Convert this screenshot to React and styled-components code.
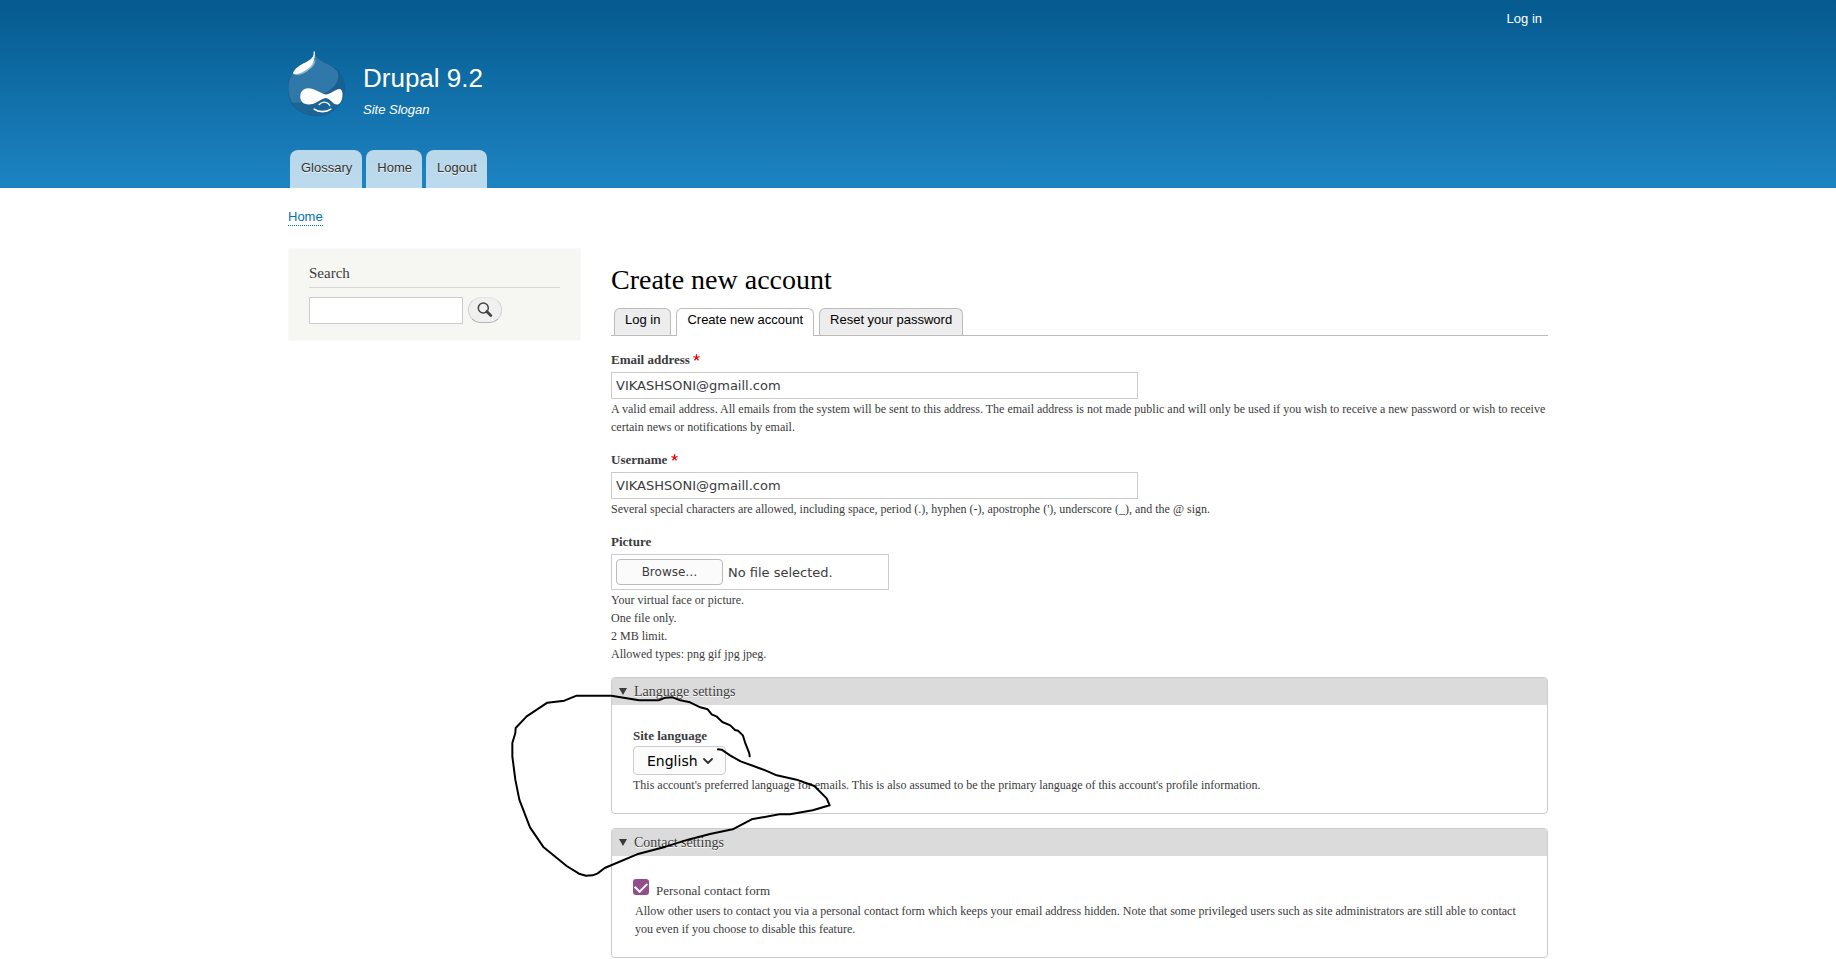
import React, { useRef, useState } from 'react';
import styled, { createGlobalStyle } from 'styled-components';

const serif = '"Liberation Serif", Georgia, serif';
const sans = '"Liberation Sans", Helvetica, sans-serif';
const system = '"DejaVu Sans", sans-serif';

function Logo() {
  return (
    <LogoSvg viewBox="24 18 172 196" aria-hidden="true">
      <path
        d="M102 18 C104 36 92 42 78 50 C48 66 24 88 24 128 C24 178 62 212 110 212 C160 212 195 176 195 128 C195 90 165 66 140 53 C120 43 107 37 104 18Z"
        fill="#2f78a9"
        stroke="#155a8c"
        strokeWidth="2"
      />
      <path
        d="M150 58 C174 70 195 92 195 128 C195 176 160 212 110 212 C72 212 46 194 32 172 C58 180 92 176 118 152 C150 138 172 124 176 94 C176 78 166 66 150 58Z"
        fill="#17608f"
      />
      <path d="M32 172 C60 174 90 172 120 150 L186 160 C172 194 144 212 110 212 C72 212 46 194 32 172Z" fill="#1a6496" />
      <path d="M42 86 C46 92 66 90 84 76 C100 64 107 54 107 42 C96 60 66 80 42 86Z" fill="#93bbd3" />
      <path d="M101 18 C104 36 92 42 78 50 C60 58 42 70 39 84 C48 90 68 82 84 70 C98 60 106 46 105 18Z" fill="#fff" />
      <path
        d="M84 129 C106 129 120 144 139 148 C156 144 168 131 180 131 C188 132 190 144 188 156 C186 168 180 178 172 178 C160 178 152 160 138 158 C122 160 108 178 86 178 C70 178 61 168 61 154 C61 140 70 129 84 129Z"
        fill="#fff"
      />
      <g fill="none" stroke="#fff" strokeLinecap="round">
        <path d="M118 178 C124 172 132 169 140 172 C145 173 148 177 150 181" strokeWidth="4" />
        <path d="M103 192 C116 202 140 202 153 192" strokeWidth="5" />
      </g>
    </LogoSvg>
  );
}

function Required() {
  return (
    <RequiredSvg viewBox="0 0 7 7" role="img" aria-label="required">
      <path d="M3.5 0.3v3.4M0.4 2.5l3.1 1.1 3.1-1.1M1.5 6.4l2-2.8 2 2.8" fill="none" stroke="#e00" strokeWidth="1.3" />
    </RequiredSvg>
  );
}

function Scribble() {
  return (
    <ScribbleSvg viewBox="0 0 1050 660" aria-hidden="true">
      <path
        d="M749 274 L748 265 L735 232 L729 212 L714 197 L705 195 L691 181 L667 171 L649 154 L635 148 L623 133 L601 127 L570 112 L541 106 L518 97 L496 98 L476 106 L417 106 L334 92 L230 92 L193 107 L142 113 L80 154 L47 189 L46 204 L37 234 L37 274 L46 344 L58 404 L90 487 L131 547 L200 603 L237 626 L258 632 L278 631 L293 625 L314 609 L411 568 L497 545 L564 524 L630 507 L698 493 L755 463 L838 448 L870 448 L938 436 L989 421 L980 400 L943 363 L890 344 L830 331 L796 316 L722 289 L690 271 L665 254 L654 253"
        fill="none"
        stroke="#000"
        strokeWidth="6"
        strokeLinecap="round"
        strokeLinejoin="round"
      />
    </ScribbleSvg>
  );
}

function TextField({ id, label, defaultValue, children }) {
  return (
    <Field>
      <Label htmlFor={id}>
        {label} <Required />
      </Label>
      <TextInput id={id} type="text" defaultValue={defaultValue} />
      <Description>{children}</Description>
    </Field>
  );
}

function PictureField() {
  const input = useRef(null);
  const [name, setName] = useState('');

  return (
    <Field>
      <Label htmlFor="picture">Picture</Label>
      <FileBox>
        <BrowseButton type="button" onClick={() => input.current.click()}>Browse…</BrowseButton>
        <span>{name || 'No file selected.'}</span>
        <input
          ref={input}
          id="picture"
          type="file"
          hidden
          onChange={(e) => setName(e.target.files[0] ? e.target.files[0].name : '')}
        />
      </FileBox>
      <Description>
        Your virtual face or picture.<br />
        One file only.<br />
        2 MB limit.<br />
        Allowed types: png gif jpg jpeg.
      </Description>
    </Field>
  );
}

function App() {
  return (
    <>
      <GlobalStyle />
      <Header>
        <Container>
          <AccountMenu><a href="#login">Log in</a></AccountMenu>
          <Branding>
            <a href="#home" aria-label="Home"><Logo /></a>
            <div>
              <SiteName href="#home">Drupal 9.2</SiteName>
              <Slogan>Site Slogan</Slogan>
            </div>
          </Branding>
          <MainMenu>
            <a href="#glossary">Glossary</a>
            <a href="#home">Home</a>
            <a href="#logout">Logout</a>
          </MainMenu>
        </Container>
      </Header>

      <Container>
        <Breadcrumb><a href="#home">Home</a></Breadcrumb>
        <Columns>
          <SearchBlock>
            <h2>Search</h2>
            <SearchForm onSubmit={(e) => e.preventDefault()}>
              <SearchInput type="search" aria-label="Search" />
              <SearchButton type="submit" aria-label="Search">
                <svg width="16" height="16" viewBox="0 0 16 16">
                  <circle cx="6.3" cy="6" r="5" fill="none" stroke="#444" strokeWidth="1.5" />
                  <path d="M9.8 9.6l4 3.9" stroke="#444" strokeWidth="2.8" strokeLinecap="round" />
                </svg>
              </SearchButton>
            </SearchForm>
          </SearchBlock>

          <Content>
            <Title>Create new account</Title>
            <Tabs>
              <Tab href="#login">Log in</Tab>
              <Tab href="#register" $active>Create new account</Tab>
              <Tab href="#password">Reset your password</Tab>
            </Tabs>
            <Form onSubmit={(e) => e.preventDefault()}>
              <TextField id="mail" label="Email address" defaultValue="VIKASHSONI@gmaill.com">
                A valid email address. All emails from the system will be sent to this address. The email address is not made public and will only be used if you wish to receive a new password or wish to receive certain news or notifications by email.
              </TextField>
              <TextField id="name" label="Username" defaultValue="VIKASHSONI@gmaill.com">
                Several special characters are allowed, including space, period (.), hyphen (-), apostrophe ('), underscore (_), and the @ sign.
              </TextField>
              <PictureField />
              <Settings>
                <Details open>
                  <summary>Language settings</summary>
                  <DetailsBody>
                    <Label htmlFor="language" $tight>Site language</Label>
                    <SelectWrap>
                      <select id="language" defaultValue="en">
                        <option value="en">English</option>
                      </select>
                      <svg width="10" height="6" viewBox="0 0 10 6" aria-hidden="true">
                        <path d="M1 1l4 4 4-4" fill="none" stroke="#333" strokeWidth="1.8" strokeLinecap="round" strokeLinejoin="round" />
                      </svg>
                    </SelectWrap>
                    <Description>
                      This account's preferred language for emails. This is also assumed to be the primary language of this account's profile information.
                    </Description>
                  </DetailsBody>
                </Details>
                <Details open>
                  <summary>Contact settings</summary>
                  <DetailsBody>
                    <CheckRow>
                      <Checkbox id="contact" type="checkbox" defaultChecked />
                      <label htmlFor="contact">Personal contact form</label>
                    </CheckRow>
                    <Description $indent>
                      Allow other users to contact you via a personal contact form which keeps your email address hidden. Note that some privileged users such as site administrators are still able to contact you even if you choose to disable this feature.
                    </Description>
                  </DetailsBody>
                </Details>
                <Scribble />
              </Settings>
            </Form>
          </Content>
        </Columns>
      </Container>
    </>
  );
}

const GlobalStyle = createGlobalStyle`
  * { box-sizing: border-box; }

  body {
    margin: 0;
    background: #fff;
    color: #3b3b3b;
    font: 14px/20px ${serif};
  }

  a { text-decoration: none; }
`;

const Container = styled.div`
  max-width: 1290px;
  margin: 0 auto;
  padding: 0 15px;
`;

const Header = styled.header`
  background: linear-gradient(to bottom, #055a8e 0%, #1d84c3 100%);
  font-family: ${sans};
`;

const AccountMenu = styled.nav`
  display: flex;
  justify-content: flex-end;
  padding: 9px 6px 0;
  font-size: 13px;

  a { color: #fff; }
`;

const Branding = styled.div`
  display: flex;
  align-items: flex-start;
  gap: 18px;
  padding-top: 22px;
  height: 121px;
`;

const LogoSvg = styled.svg`
  display: block;
  width: 57px;
  height: 66px;
`;

const SiteName = styled.a`
  display: block;
  margin-top: 11px;
  color: #fff;
  font-size: 26px;
  line-height: 32px;
`;

const Slogan = styled.div`
  margin-top: 6px;
  color: #fff;
  font-size: 13px;
  font-style: italic;
`;

const MainMenu = styled.nav`
  display: flex;
  gap: 4px;
  padding: 0 2px;

  a {
    height: 38px;
    padding: 8px 10px 0 11px;
    border-radius: 8px 8px 0 0;
    background: rgba(255, 255, 255, 0.7);
    color: #333;
    font-size: 13px;
    text-shadow: 0 1px #eee;
  }
`;

const Breadcrumb = styled.nav`
  height: 60px;
  padding-top: 19px;
  font-family: ${sans};
  font-size: 13px;

  a {
    color: #0071b3;
    border-bottom: 1px dotted #0071b3;
    padding-bottom: 1px;
  }
`;

const Columns = styled.div`
  display: grid;
  grid-template-columns: 293px minmax(0, 1fr);
  align-items: start;
  gap: 30px;
`;

const SearchBlock = styled.aside`
  padding: 14px 20px 16px;
  border: 1px solid #f9f9f9;
  background: #f6f6f2;

  h2 {
    margin: 0 0 9px;
    padding-bottom: 4px;
    border-bottom: 1px solid #d6d6d6;
    font-size: 15px;
    font-weight: normal;
  }
`;

const SearchForm = styled.form`
  display: flex;
  gap: 5px;
`;

const TextInput = styled.input`
  display: block;
  width: 527px;
  max-width: 100%;
  height: 27px;
  padding: 0 4px;
  border: 1px solid #ccc;
  background: #fff;
  color: #3b3b3b;
  font: 13px ${system};
`;

const SearchInput = styled(TextInput)`
  width: 154px;
  appearance: none;
`;

const SearchButton = styled.button`
  display: flex;
  align-items: center;
  justify-content: center;
  width: 34px;
  height: 26px;
  padding: 0;
  border: 1px solid #e4e4e4;
  border-color: #e4e4e4 #d2d2d2 #b4b4b4;
  border-radius: 13px;
  background: #f0f0f0;
`;

const Content = styled.main`
  padding-top: 14px;
`;

const Title = styled.h1`
  margin: 0 0 10px;
  color: #000;
  font-size: 28px;
  font-weight: normal;
  line-height: 36px;
`;

const Tabs = styled.nav`
  display: flex;
  gap: 5px;
  padding: 0 3px;
  border-bottom: 1px solid #bbb;
`;

const Tab = styled.a`
  height: ${(p) => (p.$active ? '28px' : '27px')};
  margin-bottom: ${(p) => (p.$active ? '-1px' : '0')};
  padding: 1px 10px 0;
  border: 1px solid #bbb;
  border-bottom: 0;
  border-radius: 6px 6px 0 0;
  background: ${(p) => (p.$active ? '#fff' : '#ededed')};
  color: #000;
  font-family: ${sans};
  font-size: 13px;
`;

const Form = styled.form`
  display: flex;
  flex-direction: column;
  gap: 14px;
  margin-top: 14px;
`;

const Field = styled.div``;

const Label = styled.label`
  display: block;
  margin-bottom: ${(p) => (p.$tight ? '0' : '2px')};
  font-size: 13px;
  font-weight: bold;
`;

const RequiredSvg = styled.svg`
  width: 7px;
  height: 7px;
  vertical-align: 3px;
`;

const Description = styled.div`
  margin-top: 1px;
  padding-left: ${(p) => (p.$indent ? '2px' : '0')};
  font-size: 12px;
  line-height: 18px;
`;

const FileBox = styled.div`
  display: flex;
  align-items: center;
  gap: 5px;
  width: 278px;
  max-width: 100%;
  height: 36px;
  padding: 0 4px;
  border: 1px solid #ccc;
  font: 13px ${system};
`;

const BrowseButton = styled.button`
  width: 107px;
  height: 26px;
  border: 1px solid #bbb;
  border-radius: 4px;
  background: #fbfbfb;
  color: #3b3b3b;
  font: 12px ${system};
`;

const Settings = styled.div`
  position: relative;
  display: flex;
  flex-direction: column;
  gap: 14px;
`;

const Details = styled.details`
  border: 1px solid #ccc;
  border-radius: 4px;
  overflow: hidden;

  summary {
    display: flex;
    align-items: center;
    gap: 7px;
    height: 27px;
    padding: 0 7px;
    background: #dbdbdb;
    text-shadow: 0 1px 0 #fff;
  }

  summary::before {
    content: "";
    border-top: 7px solid #3b3b3b;
    border-left: 4px solid transparent;
    border-right: 4px solid transparent;
  }
`;

const DetailsBody = styled.div`
  padding: 21px 21px 19px;
`;

const SelectWrap = styled.div`
  position: relative;
  width: 93px;

  select {
    display: block;
    width: 100%;
    height: 29px;
    padding: 0 13px;
    appearance: none;
    border: 1px solid #ccc;
    border-radius: 4px;
    background: #fbfbfb;
    color: #000;
    font: 14px ${system};
  }

  svg {
    position: absolute;
    right: 13px;
    top: 12px;
    pointer-events: none;
  }
`;

const CheckRow = styled.div`
  display: flex;
  align-items: flex-start;
  gap: 7px;
  margin-top: 2px;

  label {
    padding-top: 2px;
    font-size: 13px;
  }
`;

const Checkbox = styled.input`
  appearance: none;
  width: 16px;
  height: 16px;
  margin: 0;
  border-radius: 3px;
  background: #fff;
  border: 1px solid #8f4b8b;

  &:checked {
    display: grid;
    justify-content: center;
    padding-top: 3px;
    border: 0;
    background: #924d8b;
  }

  &:checked::before {
    content: "";
    width: 10px;
    height: 6px;
    border-left: 2px solid #fff;
    border-bottom: 2px solid #fff;
    transform: rotate(-45deg);
  }
`;

const ScribbleSvg = styled.svg`
  position: absolute;
  left: -111px;
  top: -12px;
  width: 350px;
  height: 220px;
  pointer-events: none;
`;

export default App;
